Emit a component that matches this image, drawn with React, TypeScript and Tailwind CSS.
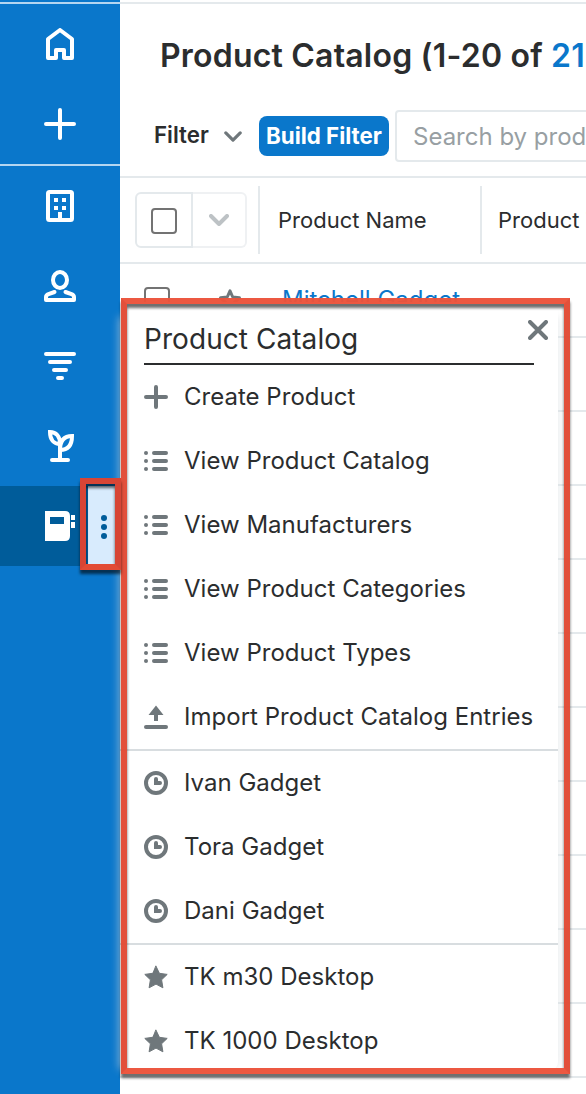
import type { ReactNode } from "react";

type IconName = "plus" | "list" | "upload" | "clock" | "star";

interface MenuItem {
  label: string;
  icon: IconName;
}

const actions: MenuItem[] = [
  { label: "Create Product",                 icon: "plus" },
  { label: "View Product Catalog",           icon: "list" },
  { label: "View Manufacturers",             icon: "list" },
  { label: "View Product Categories",        icon: "list" },
  { label: "View Product Types",             icon: "list" },
  { label: "Import Product Catalog Entries", icon: "upload" },
];

const recents: MenuItem[] = [
  { label: "Ivan Gadget", icon: "clock" },
  { label: "Tora Gadget", icon: "clock" },
  { label: "Dani Gadget", icon: "clock" },
];

const favorites: MenuItem[] = [
  { label: "TK m30 Desktop",  icon: "star" },
  { label: "TK 1000 Desktop", icon: "star" },
];

const STAR = "M12 1.2 15.4 8.3 23.2 9.4 17.6 14.8 18.9 22.8 12 19.1 5.1 22.8 6.4 14.8 0.8 9.4 8.6 8.3Z";

function MenuIcon({ name }: { name: IconName }) {
  return (
    <svg viewBox="0 0 24 24" className="size-6 shrink-0 text-[#6f777b]" fill="none" stroke="currentColor" strokeWidth="4" strokeLinecap="round">
      {name === "plus" && <path d="M12 2v20M2 12h20" />}
      {name === "list" && (
        <>
          <path d="M10 4h12M10 12h12M10 20h12" />
          <g fill="currentColor" stroke="none">
            <circle cx="2" cy="4" r="2" />
            <circle cx="2" cy="12" r="2" />
            <circle cx="2" cy="20" r="2" />
          </g>
        </>
      )}
      {name === "upload" && (
        <>
          <path d="M2 22h20" />
          <path d="M12 0.5 19.5 10H14v6h-4v-6H4.500Z" fill="currentColor" stroke="none" />
        </>
      )}
      {name === "clock" && (
        <>
          <circle cx="12" cy="12" r="10" />
          <path d="M10 8a2 2 0 0 1 4 0v2h2a2 2 0 0 1 0 4h-6Z" fill="currentColor" stroke="none" />
        </>
      )}
      {name === "star" && <path d={STAR} fill="currentColor" strokeWidth="1" strokeLinejoin="round" />}
    </svg>
  );
}

function MenuGroup({ items }: { items: MenuItem[] }) {
  return (
    <ul>
      {items.map(({ label, icon }) => (
        <li key={label} className="flex h-16 items-center gap-4 pl-6 whitespace-nowrap">
          <MenuIcon name={icon} />
          <span className="text-2xl tracking-[0.02px]">{label}</span>
        </li>
      ))}
    </ul>
  );
}

function NavItem({ children }: { children: ReactNode }) {
  return (
    <div className="flex h-20 items-center justify-center">
      <svg viewBox="0 0 32 32" className="size-8" fill="none" stroke="white" strokeWidth="4" strokeLinecap="round" strokeLinejoin="round">
        {children}
      </svg>
    </div>
  );
}

function Sidebar() {
  return (
    <nav className="w-[120px] shrink-0 border-t-2 border-[#b5d6f1] bg-[#0a77cb]">
      <NavItem>
        <path d="M4 30V11L16 2l12 9v19h-8v-8h-8v8Z" />
      </NavItem>
      <NavItem>
        <path d="M16 2v28M2 16h28" />
      </NavItem>
      <div className="h-0.5 bg-[#b5d6f1]" />
      <NavItem>
        <rect x="4" y="2" width="24" height="28" rx="1.5" />
        <path d="M10 8h4v4h-4zM18 8h4v4h-4zM10 16h4v4h-4zM18 16h4v4h-4zM14 22h4v7h-4z" fill="white" stroke="none" />
      </NavItem>
      <NavItem>
        <ellipse cx="16" cy="10" rx="7" ry="8" />
        <path d="M10.500 22 4.500 24.200Q2 25.200 2 27v3h28v-3q0-1.800-2.500-2.800L21.500 22" />
      </NavItem>
      <NavItem>
        <path d="M2 4h28M6 12h20M10 20h12M14 28h4" />
      </NavItem>
      <NavItem>
        <path d="M8 30h16M16 30V14" />
        <path d="M6 2c6 0 10 4 10 12C10 14 6 10 6 2ZM28 6c-8 0-12 5-12 14 8 0 12-5 12-14Z" strokeLinejoin="miter" />
      </NavItem>
      <div className="flex h-20 bg-[#005c9a]">
        <div className="flex w-[88px] items-center pl-11">
          <svg viewBox="0 0 32 32" className="size-8" fill="white">
            <path fillRule="evenodd" d="M1 1h20q5 0 5 5v20q0 5-5 5H1ZM6 7v7h14V7Z" />
            <path d="M27 5h4v5h-4zM27 12h4v6h-4z" />
          </svg>
        </div>
        <button className="flex flex-1 flex-col items-center justify-center gap-[3px] bg-[#d8ebfd] pt-0.5">
          <i className="size-1.5 rounded-full bg-[#005c9a]" />
          <i className="size-1.5 rounded-full bg-[#005c9a]" />
          <i className="size-1.5 rounded-full bg-[#005c9a]" />
        </button>
      </div>
    </nav>
  );
}

function Chevron({ className }: { className: string }) {
  return (
    <svg viewBox="0 0 20 12" className={className} fill="none" stroke="currentColor" strokeLinecap="round" strokeLinejoin="round">
      <path d="m2 2 8 8 8-8" />
    </svg>
  );
}

function CatalogList() {
  return (
    <main className="w-[466px] overflow-hidden border-t-2 border-[#e4e9ec]">
      <header className="flex h-[106px] items-center pb-0.5 pl-10">
        <h1 className="text-[32px] leading-none font-semibold tracking-[0.2px] whitespace-nowrap">
          Product Catalog (1-20 of <span className="text-[#0a77cb]">21</span>
        </h1>
      </header>

      {/* Filter bar */}
      <div className="flex h-[52px] items-center">
        <span className="w-[70px] pb-0.5 pl-[34px] text-[22.300px] font-semibold">Filter</span>
        <Chevron className="ml-[34px] h-[11px] w-[18px] shrink-0 stroke-[3.500] text-[#6f777b]" />
        <button className="ml-[17px] h-10 w-[130px] shrink-0 rounded-lg bg-[#0a77cb] text-[22.300px] font-bold whitespace-nowrap text-white">
          Build Filter
        </button>
        <div className="ml-1.5 flex h-[52px] w-[300px] shrink-0 items-center rounded border-2 border-[#e4e9ec] pt-0.5 pl-4 text-2xl text-[#989fa3]">
          Search by product
        </div>
      </div>

      {/* Column headings */}
      <div className="mt-3.5 flex h-[88px] items-center border-y-2 border-[#e4e9ec] text-[22px] whitespace-nowrap">
        <div className="ml-[15px] flex h-14 w-28 shrink-0">
          <div className="flex w-[58px] items-center justify-center rounded-l-md border-2 border-[#e4e9ec] pt-0.5">
            <i className="size-[26px] rounded border-2 border-[#737373]" />
          </div>
          <div className="flex flex-1 items-center justify-center rounded-r-md border-2 border-l-0 border-[#eff1f3]">
            <Chevron className="h-3 w-5 stroke-4 text-[#bdc2c5]" />
          </div>
        </div>
        <div className="ml-[11px] flex h-[68px] w-[222px] shrink-0 items-center border-l-2 border-[#e4e9ec] pl-[18px]">Product Name</div>
        <div className="flex h-[68px] shrink-0 items-center border-l-2 border-[#e4e9ec] pl-4">Product Type</div>
      </div>

      <div className="flex h-[74px] items-center border-b-2 border-[#e4e9ec]">
        <i className="ml-6 size-[26px] rounded border-2 border-[#737373]" />
        <svg viewBox="0 0 24 24" className="ml-12 size-6 text-[#6f777b]" fill="none" stroke="currentColor" strokeWidth="3" strokeLinejoin="round">
          <path d="M12 2.800 14.700 9 21.500 9.800 16.500 14.300 17.900 21 12 17.600 6.100 21 7.500 14.300 2.500 9.800 9.300 9Z" />
        </svg>
        <a className="ml-10 text-2xl whitespace-nowrap text-[#0a77cb]">Mitchell Gadget</a>
      </div>
      {Array.from({ length: 10 }, (_, i) => (
        <div key={i} className="h-[74px] border-b-2 border-[#e4e9ec]" />
      ))}
    </main>
  );
}

function CatalogMenu() {
  return (
    <div className="absolute top-[302px] left-[120px] h-[768px] w-[438px] overflow-hidden rounded-br-lg bg-white">
      <div className="ml-6 flex h-[63px] w-[390px] items-end border-b-2 border-[#2b2d2e] pb-[7px]">
        <h2 className="text-[28px] leading-[34px] tracking-[0.06px] whitespace-nowrap">Product Catalog</h2>
      </div>
      <svg viewBox="0 0 20 20" className="absolute top-[18px] left-[408px] size-5 text-[#6f777b]" fill="none" stroke="currentColor" strokeWidth="4" strokeLinecap="round">
        <path d="m2 2 16 16M18 2 2 18" />
      </svg>
      <MenuGroup items={actions} />
      <div className="h-0.5 bg-[#d8dde0]" />
      <MenuGroup items={recents} />
      <div className="h-0.5 bg-[#d8dde0]" />
      <MenuGroup items={favorites} />
    </div>
  );
}

export default function App() {
  return (
    <div className="relative h-[1094px] w-[586px] overflow-hidden bg-white pt-0.5 font-[Inter,sans-serif] text-[#2b2d2e]">
      <div className="absolute top-0 left-0 h-0.5 w-[120px] bg-[#0a77cb]" />
      <div className="flex h-[1092px]">
        <Sidebar />
        <CatalogList />
      </div>

      {/* soft edge under the open menu */}
      <div className="absolute top-[314px] left-[120px] h-[750px] w-[438px] rounded-br-lg shadow-[0_4px_8px_1px_rgba(215,220,223,0.6)]" />
      <CatalogMenu />

      {/* callout frames */}
      <div className="absolute top-[298px] left-[121px] h-[776px] w-[449px] border-6 border-x-[#e24b35] border-y-[#ec533b] opacity-[0.97] drop-shadow-[0_4px_1.5px_rgba(0,0,0,0.6)]" />
      <div className="absolute top-[478px] left-20 h-[92px] w-[41px] border-6 border-x-[#d74535] border-t-[#d74535] border-b-[#e24b35] drop-shadow-[0_4px_1.5px_rgba(0,0,0,0.6)]" />
    </div>
  );
}
